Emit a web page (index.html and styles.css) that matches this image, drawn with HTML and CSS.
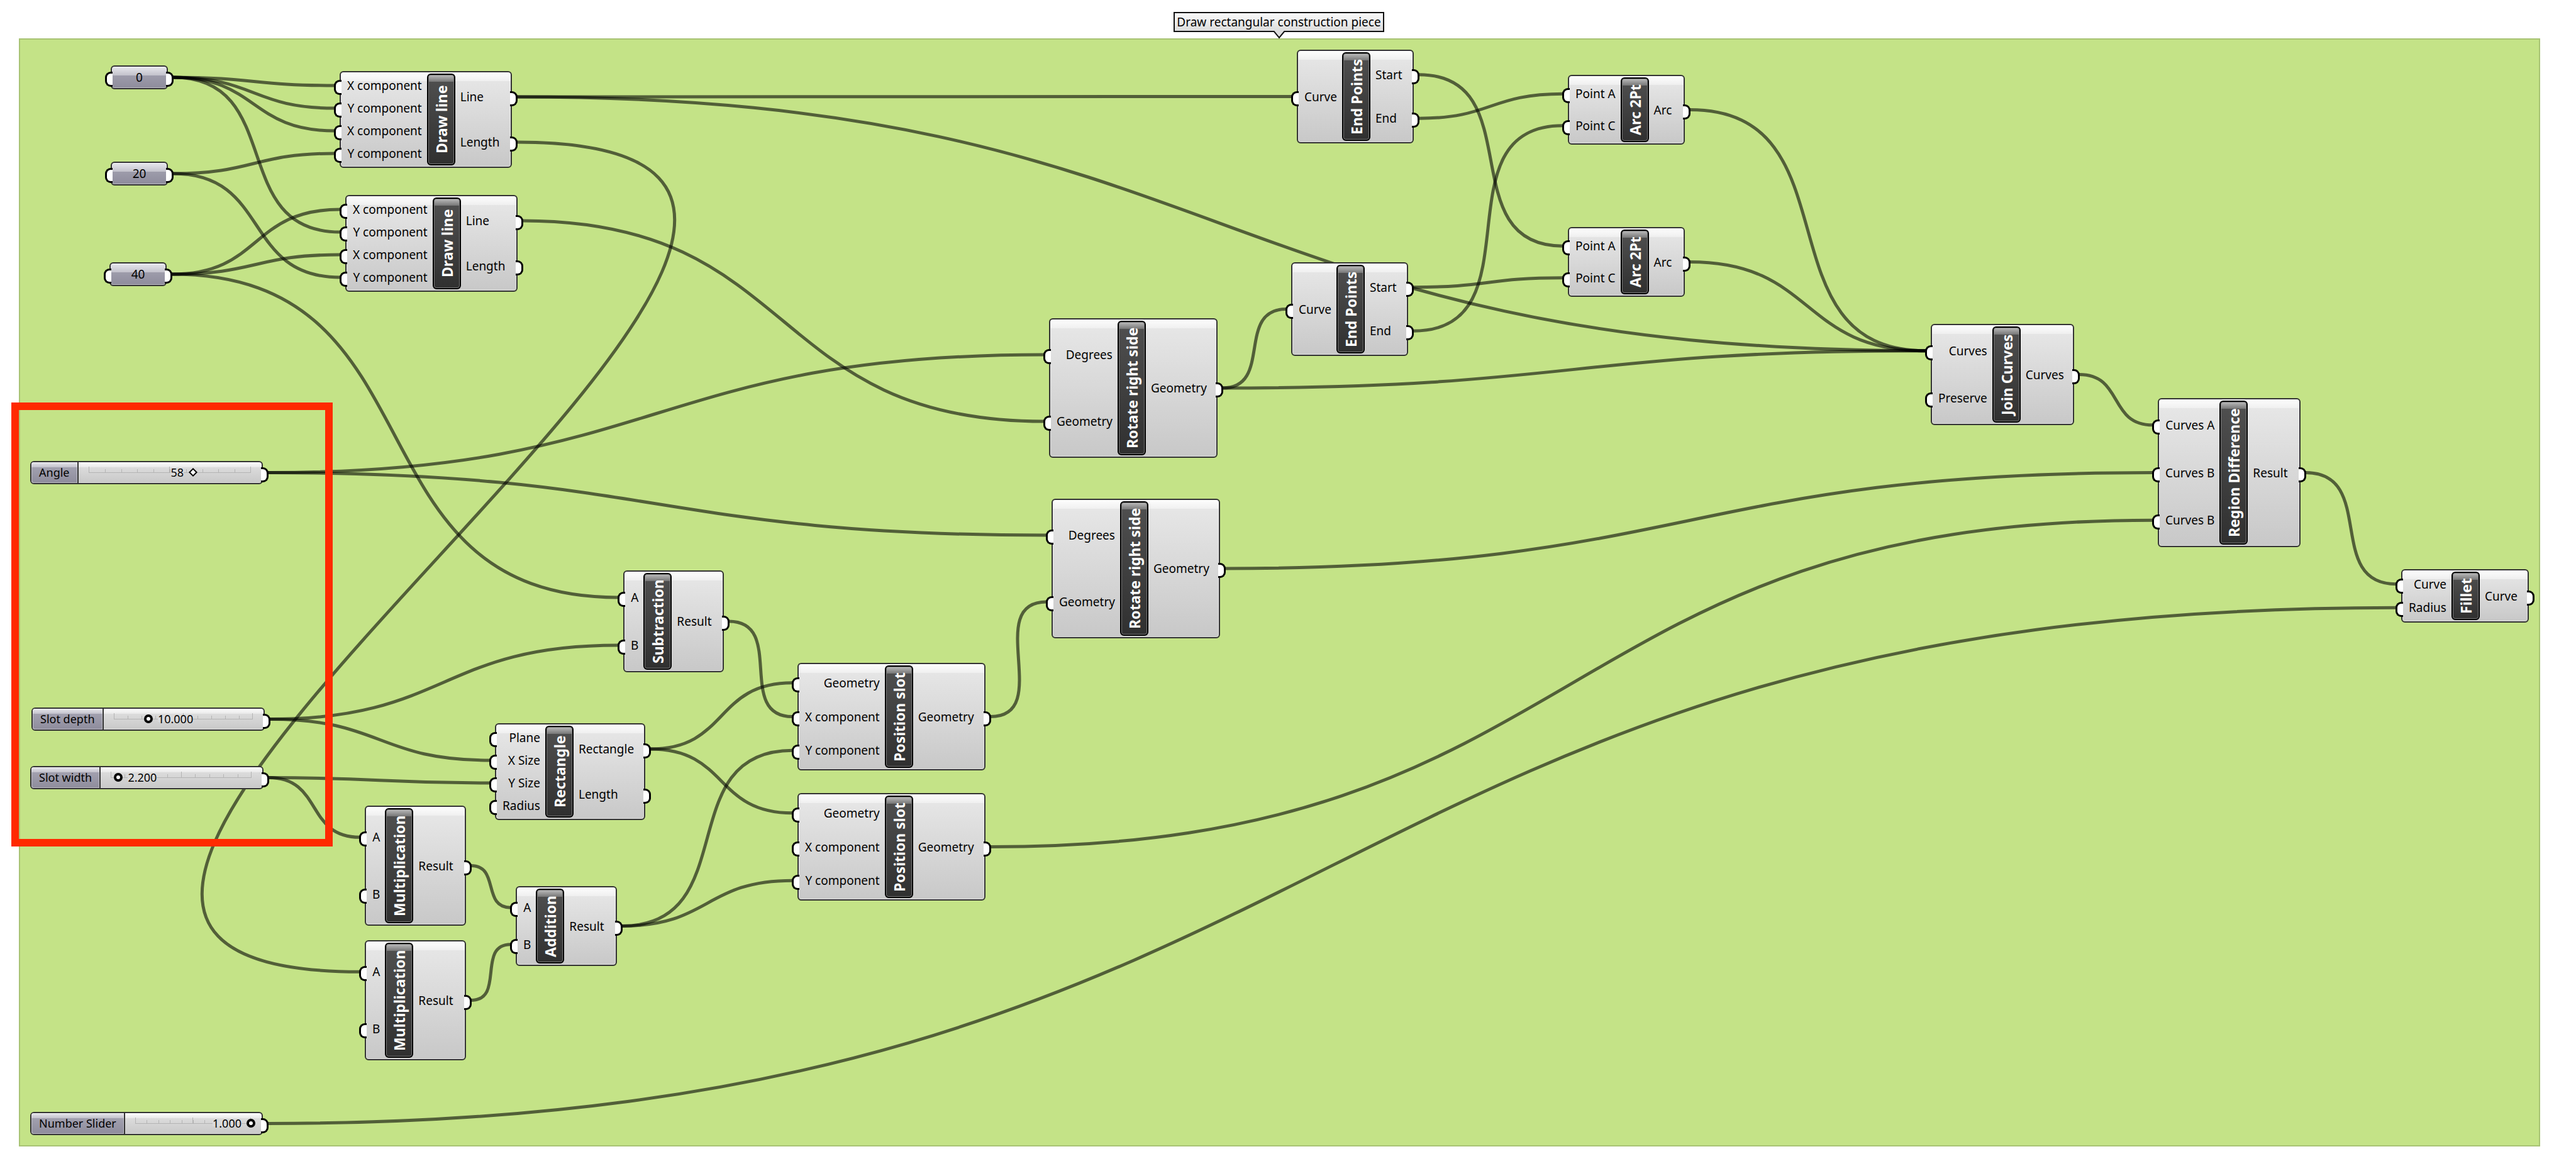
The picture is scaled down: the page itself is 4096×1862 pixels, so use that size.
FILE: index.html
```html
<!DOCTYPE html>
<html lang="en">
<head>
<meta charset="utf-8">
<title>Draw rectangular construction piece</title>
<link rel="stylesheet" href="styles.css">
</head>
<body>
<main class="canvas">
  <section class="group" aria-label="Draw rectangular construction piece"></section>
  <svg class="wires" id="wires" aria-hidden="true"></svg>

  <div class="scribble" id="caption">Draw rectangular construction piece
    <svg class="tail" viewBox="0 0 20 13" aria-hidden="true"><path d="M1 0 L10 11 L19 0" /></svg>
  </div>

  <div class="node param" id="zero"><ul class="in"><li></li></ul><span>0</span><ul class="out"><li></li></ul></div>
  <div class="node param" id="twenty"><ul class="in"><li></li></ul><span>20</span><ul class="out"><li></li></ul></div>
  <div class="node param" id="forty"><ul class="in"><li></li></ul><span>40</span><ul class="out"><li></li></ul></div>

  <article class="node" id="line1">
    <ul class="in"><li>X component</li><li>Y component</li><li>X component</li><li>Y component</li></ul>
    <h2>Draw line</h2>
    <ul class="out"><li>Line</li><li>Length</li></ul>
  </article>
  <article class="node" id="line2">
    <ul class="in"><li>X component</li><li>Y component</li><li>X component</li><li>Y component</li></ul>
    <h2>Draw line</h2>
    <ul class="out"><li>Line</li><li>Length</li></ul>
  </article>
  <article class="node" id="ends1">
    <ul class="in"><li>Curve</li></ul>
    <h2>End Points</h2>
    <ul class="out"><li>Start</li><li>End</li></ul>
  </article>
  <article class="node" id="ends2">
    <ul class="in"><li>Curve</li></ul>
    <h2>End Points</h2>
    <ul class="out"><li>Start</li><li>End</li></ul>
  </article>
  <article class="node" id="arc1">
    <ul class="in"><li>Point A</li><li>Point C</li></ul>
    <h2>Arc 2Pt</h2>
    <ul class="out"><li>Arc</li></ul>
  </article>
  <article class="node" id="arc2">
    <ul class="in"><li>Point A</li><li>Point C</li></ul>
    <h2>Arc 2Pt</h2>
    <ul class="out"><li>Arc</li></ul>
  </article>
  <article class="node" id="rotate1">
    <ul class="in"><li>Degrees</li><li>Geometry</li></ul>
    <h2>Rotate right side</h2>
    <ul class="out"><li>Geometry</li></ul>
  </article>
  <article class="node" id="rotate2">
    <ul class="in"><li>Degrees</li><li>Geometry</li></ul>
    <h2>Rotate right side</h2>
    <ul class="out"><li>Geometry</li></ul>
  </article>
  <article class="node" id="subtraction">
    <ul class="in"><li>A</li><li>B</li></ul>
    <h2>Subtraction</h2>
    <ul class="out"><li>Result</li></ul>
  </article>
  <article class="node" id="rectangle">
    <ul class="in"><li>Plane</li><li>X Size</li><li>Y Size</li><li>Radius</li></ul>
    <h2>Rectangle</h2>
    <ul class="out"><li>Rectangle</li><li>Length</li></ul>
  </article>
  <article class="node" id="slot1">
    <ul class="in"><li>Geometry</li><li>X component</li><li>Y component</li></ul>
    <h2>Position slot</h2>
    <ul class="out"><li>Geometry</li></ul>
  </article>
  <article class="node" id="slot2">
    <ul class="in"><li>Geometry</li><li>X component</li><li>Y component</li></ul>
    <h2>Position slot</h2>
    <ul class="out"><li>Geometry</li></ul>
  </article>
  <article class="node" id="multiply1">
    <ul class="in"><li>A</li><li>B</li></ul>
    <h2>Multiplication</h2>
    <ul class="out"><li>Result</li></ul>
  </article>
  <article class="node" id="multiply2">
    <ul class="in"><li>A</li><li>B</li></ul>
    <h2>Multiplication</h2>
    <ul class="out"><li>Result</li></ul>
  </article>
  <article class="node" id="addition">
    <ul class="in"><li>A</li><li>B</li></ul>
    <h2>Addition</h2>
    <ul class="out"><li>Result</li></ul>
  </article>
  <article class="node" id="join">
    <ul class="in"><li>Curves</li><li>Preserve</li></ul>
    <h2>Join Curves</h2>
    <ul class="out"><li>Curves</li></ul>
  </article>
  <article class="node" id="region">
    <ul class="in"><li>Curves A</li><li>Curves B</li><li>Curves B</li></ul>
    <h2>Region Difference</h2>
    <ul class="out"><li>Result</li></ul>
  </article>
  <article class="node" id="fillet">
    <ul class="in"><li>Curve</li><li>Radius</li></ul>
    <h2>Fillet</h2>
    <ul class="out"><li>Curve</li></ul>
  </article>

  <div class="node slider" id="angle">
    <label for="angle-value">Angle</label>
    <div class="track" style="--at: 64.4%">
      <input class="whole" type="range" id="angle-value" min="0" max="90" step="1" value="58">
      <output class="before" for="angle-value">58</output>
    </div>
    <ul class="out"><li></li></ul>
  </div>
  <div class="node slider" id="depth">
    <label for="depth-value">Slot depth</label>
    <div class="track" style="--at: 25%">
      <input type="range" id="depth-value" min="0" max="40" step="0.001" value="10">
      <output class="after" for="depth-value">10.000</output>
    </div>
    <ul class="out"><li></li></ul>
  </div>
  <div class="node slider" id="width">
    <label for="width-value">Slot width</label>
    <div class="track" style="--at: 5.5%">
      <input type="range" id="width-value" min="0" max="40" step="0.001" value="2.2">
      <output class="after" for="width-value">2.200</output>
    </div>
    <ul class="out"><li></li></ul>
  </div>
  <div class="node slider" id="number">
    <label for="number-value">Number Slider</label>
    <div class="track" style="--at: 100%">
      <input type="range" id="number-value" min="0" max="1" step="0.001" value="1">
      <output class="before" for="number-value">1.000</output>
    </div>
    <ul class="out"><li></li></ul>
  </div>

  <div class="highlight"></div>
</main>
<script src="wires.js"></script>
</body>
</html>
```
FILE: styles.css
```css
* { box-sizing: border-box; }

body {
  margin: 0;
  background: #fff;
  color: #000;
  font: 19px/24px "Noto Sans", "Open Sans", sans-serif;
}

ul, h2 { margin: 0; padding: 0; list-style: none; }

.canvas {
  position: relative;
  display: flex;
  min-height: 100vh;
  padding: 61px 57px 39px 30px;
}

.group {
  flex: 1;
  background: #c4e387;
  border: 2px solid rgba(0, 0, 0, 0.14);
}

.wires {
  position: absolute;
  inset: 0;
  width: 100%;
  height: 100%;
  fill: none;
  stroke: #000;
  stroke-opacity: 0.58;
  stroke-width: 5px;
}

/* Caption over the group */
.scribble {
  position: absolute;
  display: flex;
  justify-content: center;
  align-items: center;
  white-space: nowrap;
  border: 2px solid #111;
  background: linear-gradient(#fafafa, #dcdcdc);
}
.tail {
  position: absolute;
  top: 100%;
  left: 50%;
  width: 20px;
  height: 13px;
  margin-left: -10px;
  fill: #dcdcdc;
  stroke: #111;
  stroke-width: 2px;
}

/* Components */
.node {
  position: absolute;
  display: flex;
  padding: 2px;
  border: 2px solid #333;
  border-radius: 6px;
  background:
    linear-gradient(rgba(255, 255, 255, 0.9), rgba(255, 255, 255, 0.4)) 0 0 / 100% 14px no-repeat,
    linear-gradient(#e8e8e8, #c8c8c8) padding-box;
  box-shadow: inset 0 0 0 1px rgba(255, 255, 255, 0.4);
}
.in, .out {
  display: flex;
  flex-direction: column;
  padding: 1px 0;
}
.in { text-align: right; }
.out { flex: 1; }
.in li, .out li {
  position: relative;
  display: flex;
  flex: 1;
  align-items: center;
  white-space: nowrap;
}
.in li { justify-content: flex-end; padding: 0 8px; }
.out li { padding-left: 8px; }

/* Half-round grips on the sides */
.in li::before, .out li::after {
  content: "";
  position: absolute;
  top: calc(50% - 9px);
  width: 9px;
  height: 18px;
  border: 3px solid #000;
  background: #fff;
}
.in li::before {
  left: -13px;
  border-right: 0;
  border-radius: 9px 0 0 9px;
}
.out li::after {
  right: -13px;
  border-left: 0;
  border-radius: 0 9px 9px 0;
}

/* The name plate reads upwards; it is turned half round, so its gloss is at the end */
.node h2 {
  display: flex;
  align-items: center;
  justify-content: center;
  width: 45px;
  border: 2px solid #000;
  border-radius: 6px;
  background:
    linear-gradient(#767676, #bdbdbd) 0 100% / 100% 11px no-repeat,
    linear-gradient(#303030, #505050);
  box-shadow: inset 0 0 0 1px #777;
  color: #fff;
  font-size: 23px;
  line-height: 28px;
  font-weight: 700;
  white-space: nowrap;
  writing-mode: vertical-rl;
  transform: rotate(180deg);
}

/* Value parameters */
.param, .slider label {
  background:
    linear-gradient(#e8e8ee, #c2c1cb) 0 0 / 100% 14px no-repeat,
    linear-gradient(#a8a7b5, #8e8c9c) padding-box;
}
.param {
  width: 91px;
  height: 38px;
  align-items: stretch;
}
.param > span {
  flex: 1;
  text-align: center;
  line-height: 30px;
}
.param .in, .param .out { flex: none; width: 0; }
.param .in li, .param .out li { padding: 0; }

/* Sliders */
.slider {
  height: 37px;
  padding: 0;
  background:
    linear-gradient(#fff, #e8e8e8) 0 0 / 100% 8px no-repeat,
    linear-gradient(#e2e2e2, #c8c8c8) padding-box;
}
.slider label {
  padding: 0 12px;
  border-right: 2px solid #333;
  border-radius: 4px 0 0 4px;
  background-size: 100% 8px, 100% 100%;
  box-shadow: inset 0 0 0 1px rgba(255, 255, 255, 0.4);
  font-size: 18px;
  line-height: 33px;
  white-space: nowrap;
}
.slider .out { flex: none; width: 0; padding: 0; }
.slider .out li { padding: 0; }
.slider .out li::after { right: -11px; }
.track {
  position: relative;
  flex: 1;
  margin: 7px 17px 16px 16px;
  background:
    linear-gradient(#b4b4b4, #b4b4b4) 0 0 / 1px 100% no-repeat,
    linear-gradient(#b4b4b4, #b4b4b4) 50% 0 / 1px 100% no-repeat,
    linear-gradient(#b4b4b4, #b4b4b4) 100% 0 / 1px 100% no-repeat,
    linear-gradient(#b4b4b4, #b4b4b4) 0 100% / 100% 1px no-repeat,
    repeating-linear-gradient(90deg, #b4b4b4 0 1px, transparent 1px 10%) 0 100% / 100% 6px no-repeat;
}
.track input {
  appearance: none;
  position: absolute;
  left: -7px;
  top: 2px;
  width: calc(100% + 14px);
  height: 14px;
  margin: 0;
  background: none;
}
.track input::-webkit-slider-thumb {
  appearance: none;
  width: 14px;
  height: 14px;
  border: 4px solid #000;
  border-radius: 7px;
  background: #fff;
}
.track input.whole { left: -5px; width: calc(100% + 10px); }
.track input.whole::-webkit-slider-thumb {
  width: 10px;
  height: 10px;
  border-width: 2px;
  border-radius: 0;
  transform: rotate(45deg);
}
.track output {
  position: absolute;
  top: 4px;
  height: 10px;
  background: #dadada;
  font-size: 18px;
  line-height: 10px;
}
.track .before { right: calc(100% - var(--at) + 15px); }
.track .after { left: calc(var(--at) + 15px); }

.highlight {
  position: absolute;
  left: 18px;
  top: 640px;
  width: 511px;
  height: 706px;
  border: 12px solid #ff2a00;
}

/* Places on the canvas */
#caption { left: 1866px; top: 19px; width: 335px; height: 32px; }
#zero { left: 176px; top: 104px; }
#twenty { left: 176px; top: 257px; }
#forty { left: 174px; top: 417px; }
#line1 { left: 540px; top: 113px; width: 274px; height: 154px; }
#line2 { left: 549px; top: 310px; width: 274px; height: 154px; }
#ends1 { left: 2062px; top: 79px; width: 186px; height: 149px; }
#ends2 { left: 2053px; top: 417px; width: 186px; height: 149px; }
#arc1 { left: 2493px; top: 119px; width: 186px; height: 111px; }
#arc2 { left: 2493px; top: 361px; width: 186px; height: 111px; }
#rotate1 { left: 1668px; top: 506px; width: 268px; height: 222px; }
#rotate2 { left: 1672px; top: 793px; width: 268px; height: 222px; }
#subtraction { left: 991px; top: 907px; width: 160px; height: 162px; }
#rectangle { left: 787px; top: 1150px; width: 239px; height: 154px; }
#slot1 { left: 1268px; top: 1054px; width: 299px; height: 171px; }
#slot2 { left: 1268px; top: 1261px; width: 299px; height: 171px; }
#multiply1 { left: 580px; top: 1281px; width: 161px; height: 191px; }
#multiply2 { left: 580px; top: 1495px; width: 161px; height: 191px; }
#addition { left: 820px; top: 1409px; width: 161px; height: 127px; }
#join { left: 3070px; top: 515px; width: 228px; height: 161px; }
#region { left: 3431px; top: 633px; width: 227px; height: 237px; }
#fillet { left: 3818px; top: 905px; width: 203px; height: 85px; }
#angle { left: 48px; top: 733px; width: 370px; }
#depth { left: 50px; top: 1125px; width: 371px; }
#width { left: 48px; top: 1218px; width: 371px; }
#number { left: 48px; top: 1768px; width: 370px; }
```
FILE: wires.js
```js
// Each wire: [source node, output index, target node, input index]
const links = [
  ["zero", 0, "line1", 0], ["zero", 0, "line1", 1], ["zero", 0, "line1", 2], ["zero", 0, "line2", 1],
  ["twenty", 0, "line1", 3], ["twenty", 0, "line2", 3],
  ["forty", 0, "line2", 0], ["forty", 0, "line2", 2], ["forty", 0, "subtraction", 0],
  ["line1", 0, "ends1", 0], ["line1", 0, "join", 0], ["line1", 1, "multiply2", 0],
  ["line2", 0, "rotate1", 1],
  ["angle", 0, "rotate1", 0], ["angle", 0, "rotate2", 0],
  ["depth", 0, "subtraction", 1], ["depth", 0, "rectangle", 1],
  ["width", 0, "rectangle", 2], ["width", 0, "multiply1", 0],
  ["multiply1", 0, "addition", 0], ["multiply2", 0, "addition", 1],
  ["addition", 0, "slot1", 2], ["addition", 0, "slot2", 2],
  ["rectangle", 0, "slot1", 0], ["rectangle", 0, "slot2", 0],
  ["subtraction", 0, "slot1", 1], ["slot1", 0, "rotate2", 1],
  ["slot2", 0, "region", 2], ["rotate2", 0, "region", 1],
  ["rotate1", 0, "ends2", 0], ["rotate1", 0, "join", 0],
  ["ends1", 0, "arc2", 0], ["ends1", 1, "arc1", 0],
  ["ends2", 0, "arc2", 1], ["ends2", 1, "arc1", 1],
  ["arc1", 0, "join", 0], ["arc2", 0, "join", 0],
  ["join", 0, "region", 0], ["region", 0, "fillet", 0], ["number", 0, "fillet", 1],
];

const GRIP = 8;
const svg = document.getElementById("wires");
const origin = svg.getBoundingClientRect();

// The outer point of a port's grip, in canvas coordinates
function anchor(id, side, index) {
  const node = document.getElementById(id);
  const row = node.querySelectorAll("." + side + " li")[index].getBoundingClientRect();
  const box = node.getBoundingClientRect();
  const x = side === "out" ? box.right + GRIP : box.left - GRIP;
  return [x - origin.left, row.top + row.height / 2 - origin.top];
}

for (const [from, output, to, input] of links) {
  const [x1, y1] = anchor(from, "out", output);
  const [x2, y2] = anchor(to, "in", input);
  let reach = Math.hypot(x2 - x1, y2 - y1) / 2;
  if (x2 < x1) reach += (x1 - x2) * 1.15;
  const path = document.createElementNS("http://www.w3.org/2000/svg", "path");
  path.setAttribute("d", `M${x1} ${y1}C${x1 + reach} ${y1} ${x2 - reach} ${y2} ${x2} ${y2}`);
  svg.append(path);
}
```
